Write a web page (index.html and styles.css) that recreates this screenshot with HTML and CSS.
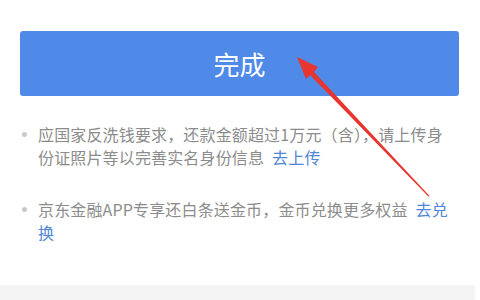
FILE: index.html
```html
<!DOCTYPE html>
<html lang="zh-CN">
<head>
<meta charset="utf-8">
<title>完成</title>
<link rel="stylesheet" href="styles.css">
</head>
<body>
<div class="page">
  <div class="btn">完成</div>
  <ul class="notes">
    <li class="note"><span class="dot"></span><p class="txt">应国家反洗钱要求，还款金额超过1万元（含），请上传身份证照片等以完善实名身份信息<a class="link">去上传</a></p></li>
    <li class="note"><span class="dot"></span><p class="txt">京东金融APP专享还白条送金币，金币兑换更多权益<a class="link">去兑换</a></p></li>
  </ul>
  <div class="band"></div>
  <svg class="arrow" width="480" height="300" viewBox="0 0 480 300">
    <polygon fill="#e8352f" points="297,57 318,67 314,72 429.6,196 428.4,196.6 310,75 306,79"/>
  </svg>
</div>
</body>
</html>
```
FILE: styles.css
```css
html, body {
  margin: 0;
  padding: 0;
  background: #ffffff;
}
.page {
  position: relative;
  width: 480px;
  height: 300px;
  overflow: hidden;
  padding-top: 31px;
  box-sizing: border-box;
  font-family: "Noto Sans CJK SC", "Noto Sans", sans-serif;
}
.btn {
  margin: 0 21px 0 20px;
  height: 65px;
  border-radius: 3px;
  background: #4f8ae8;
  color: #ffffff;
  font-size: 26px;
  display: flex;
  align-items: center;
  justify-content: center;
}
.notes {
  list-style: none;
  margin: 0;
  padding: 27px 28px 0 0;
  display: flex;
  flex-direction: column;
  gap: 29px;
}
.note {
  display: flex;
  align-items: flex-start;
}
.dot {
  flex: none;
  width: 5px;
  height: 5px;
  border-radius: 50%;
  background: #c9c9c9;
  margin: 9px 11px 0 22px;
}
.txt {
  margin: 0;
  font-size: 16px;
  line-height: 23px;
  letter-spacing: 0.15px;
  color: #8c8c8c;
}
.link {
  color: #4f86d8;
  margin-left: 8px;
}
.band {
  margin-top: 41px;
  width: 475px;
  height: 20px;
  background: #f4f4f4;
}
.arrow {
  position: absolute;
  left: 0;
  top: 0;
}
```
